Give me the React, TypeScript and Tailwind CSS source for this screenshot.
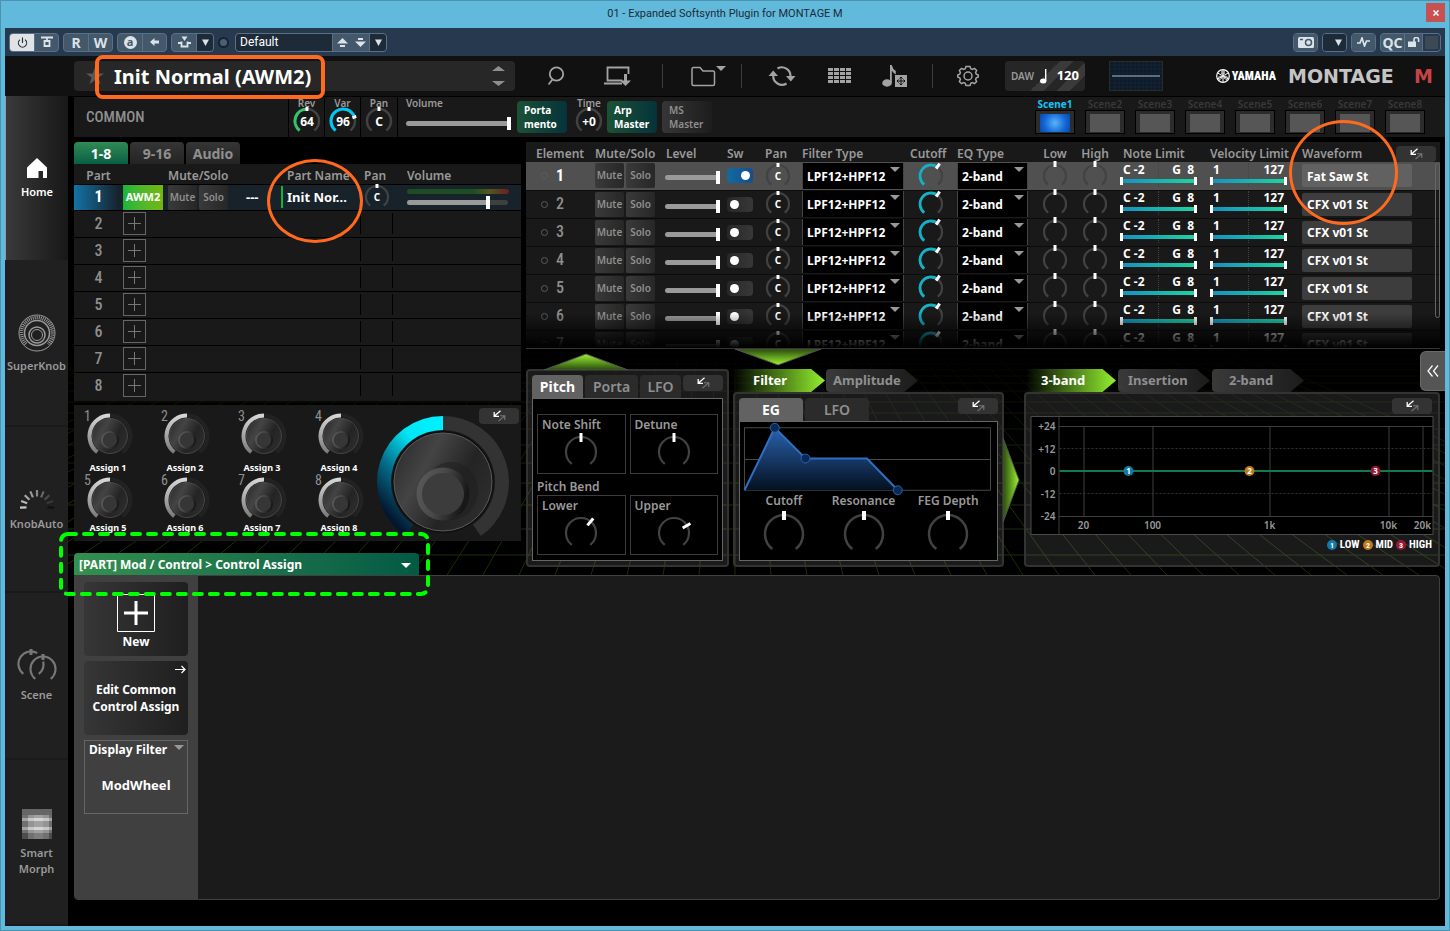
// App.tsx
import { ReactNode, useState } from "react";
import { Power } from "lucide-react";

const NARROW = "font-['Roboto_Condensed','Liberation_Sans_Narrow',Roboto,sans-serif]";

const polar = (cx: number, cy: number, r: number, deg: number) => {
    const a = ((deg - 90) * Math.PI) / 180;
    return [cx + r * Math.cos(a), cy + r * Math.sin(a)];
};

// arc from one angle to another, 0 is straight up, clockwise
const arc = (cx: number, cy: number, r: number, from: number, to: number) => {
    const [x1, y1] = polar(cx, cy, r, from);
    const [x2, y2] = polar(cx, cy, r, to);
    return `M${x1.toFixed(2)} ${y1.toFixed(2)}A${r} ${r} 0 ${to - from > 180 ? 1 : 0} 1 ${x2.toFixed(2)} ${y2.toFixed(2)}`;
};

interface KnobProps {
    r: number;
    angle?: number;
    color?: string;
    label?: string;
    stroke?: number;
    tickFrom?: number;
    tickTo?: number;
    tickWidth?: number;
    fontSize?: number;
}

function Knob({ r, angle = 0, color, label, stroke = 2.2, tickFrom = -2, tickTo = 2, tickWidth = 3, fontSize = 10 }: KnobProps) {
    const size = (r + 4) * 2;
    const c = size / 2;
    const [x1, y1] = polar(c, c, r + tickFrom, angle);
    const [x2, y2] = polar(c, c, r + tickTo, angle);
    return (
        <svg width={size} height={size} viewBox={`0 0 ${size} ${size}`} className="block shrink-0 overflow-visible">
            <path d={arc(c, c, r, -142, 142)} fill="none" stroke="#424242" strokeWidth={stroke} />
            {color && <path d={arc(c, c, r, -142, angle)} fill="none" stroke={color} strokeWidth={stroke + 0.6} />}
            <line x1={x1} y1={y1} x2={x2} y2={y2} stroke="#fff" strokeWidth={tickWidth} />
            {label && (
                <text x={c} y={c + fontSize * 0.4} textAnchor="middle" fill="#fff" fontSize={fontSize} fontWeight="700">
                    {label}
                </text>
            )}
        </svg>
    );
}

function ExpandButton({ className = "" }: { className?: string }) {
    return (
        <button aria-label="Expand" className={`flex h-4 w-10 shrink-0 items-center justify-center rounded bg-[#333] ${className}`}>
            <svg width="13" height="12" viewBox="0 0 13 12" fill="none">
                <path d="M7.500.8 1.500 6M1.200 2v4.300H6" stroke="#fff" strokeWidth="1.300" />
                <path d="M5.500 11.200 11.500 6M7 5.700h4.800V10" stroke="#777" strokeWidth="1.100" />
            </svg>
        </button>
    );
}

function Triangle({ className = "" }: { className?: string }) {
    return (
        <svg width="10" height="5" viewBox="0 0 10 5" className={`pointer-events-none ${className}`}>
            <path d="M0 0h10L5 5z" fill="currentColor" />
        </svg>
    );
}

/* ---------- host window ---------- */

const hostBtn = "flex h-full items-center justify-center bg-[#43586b] text-[#dbe2e8]";
const hostGroup = "flex h-[19px] gap-px overflow-hidden rounded-sm border border-[#5b7183] bg-[#5b7183]";
const hostMenu = "flex h-full w-4 items-center justify-center bg-[#1d2b39] text-[#dbe2e8]";

const MenuArrow = () => <svg width="7" height="7" viewBox="0 0 7 7"><path d="M0 .5h7l-3.500 6.500z" fill="currentColor" /></svg>;

function TitleBar() {
    return (
        <div className="relative flex h-[27px] items-center justify-center">
            <h1 className="text-[11px] text-[#1c2c36] font-[Roboto,sans-serif]">01 - Expanded Softsynth Plugin for MONTAGE M</h1>
            <button aria-label="Close" className="absolute right-0 top-0.5 flex h-[19px] w-[19px] items-center justify-center bg-[#c75050] text-white">
                <svg width="6" height="6" viewBox="0 0 6 6"><path d="M.5.5l5 5M5.500.5l-5 5" stroke="currentColor" strokeWidth="1.500" /></svg>
            </button>
        </div>
    );
}

function HostToolbar() {
    return (
        <div className="flex h-7 shrink-0 items-center gap-1 bg-[#27394e] px-1 text-[14px] font-bold">
            <div className={hostGroup}>
                <button aria-label="Power" className="flex w-6 items-center justify-center bg-[#dfe3e6] text-[#26323e]"><Power size={11} strokeWidth={2.5} /></button>
                <button aria-label="Bypass" className={`${hostBtn} w-[23px]`}>
                    <svg width="12" height="12" viewBox="0 0 12 12" fill="none" stroke="currentColor" strokeWidth="1.800"><path d="M0 1.500h12M3.500 5h5v5h-5zM6 1.500V5" /></svg>
                </button>
            </div>
            <div className={hostGroup}>
                <button className={`${hostBtn} w-6`}>R</button>
                <button className={`${hostBtn} w-[23px]`}>W</button>
            </div>
            <div className={hostGroup}>
                <button className={`${hostBtn} w-6`}><span className="flex h-[13px] w-[13px] items-center justify-center rounded-full bg-[#dbe2e8] pb-px text-[11px] leading-none text-[#43586b]">a</span></button>
                <button aria-label="Back" className={`${hostBtn} w-[23px]`}><svg width="9" height="8" viewBox="0 0 9 8"><path d="M0 4l4.500-4v2.500H9v3H4.500V8z" fill="currentColor" /></svg></button>
            </div>
            <div className={hostGroup}>
                <button aria-label="Routing" className={`${hostBtn} w-6`}>
                    <svg width="13" height="12" viewBox="0 0 13 12" fill="none" stroke="currentColor" strokeWidth="1.800"><path d="M0 7h3.500V5.500M13 7H9.500V5.500M3.500 7v3.500h6V7" /><path d="M3.500.5h6l-3 4.500z" fill="currentColor" stroke="none" /></svg>
                </button>
                <button aria-label="Routing menu" className={hostMenu}><MenuArrow /></button>
            </div>
            <span className="h-[11px] w-[11px] rounded-full border-2 border-[#16222e] bg-[#4a6078]"></span>
            <div className={`${hostGroup} ml-0.5`}>
                <input aria-label="Preset" defaultValue="Default" className="w-24 bg-[#1d2b39] px-1 text-[12px] font-normal text-white outline-none font-[Roboto,sans-serif]" />
                <button aria-label="Previous preset" className="flex w-[18px] items-center justify-center bg-[#43586b] text-[#dbe2e8]"><svg width="11" height="9" viewBox="0 0 11 9"><path d="M0 5.500 5.500 0 11 5.500zM3 7h5v2H3z" fill="currentColor" /></svg></button>
                <button aria-label="Next preset" className="-ml-px flex w-[18px] items-center justify-center bg-[#43586b] text-[#dbe2e8]"><svg width="11" height="9" viewBox="0 0 11 9"><path d="M0 3.500 5.500 9 11 3.500zM3 0h5v2H3z" fill="currentColor" /></svg></button>
                <button aria-label="Preset menu" className={hostMenu}><MenuArrow /></button>
            </div>
            <div className={`${hostGroup} ml-auto`}>
                <button aria-label="Snapshot" className={`${hostBtn} w-[23px]`}>
                    <svg width="16" height="11" viewBox="0 0 16 11"><rect width="16" height="11" rx="1.500" fill="currentColor" /><circle cx="10.500" cy="5.500" r="3" fill="none" stroke="#43586b" strokeWidth="1.500" /><path d="M2 2.500h3" stroke="#43586b" strokeWidth="1.500" /></svg>
                </button>
            </div>
            <div className={hostGroup}><button aria-label="Snapshot menu" className="flex h-full w-[23px] items-center justify-center bg-[#1d2b39] pl-2 text-[#dbe2e8]"><MenuArrow /></button></div>
            <div className={hostGroup}>
                <button aria-label="Activity" className={`${hostBtn} w-[23px]`}><svg width="13" height="10" viewBox="0 0 13 10" fill="none" stroke="currentColor" strokeWidth="1.700"><path d="M0 6h3l2-5 2.500 8L9.500 4H13" /></svg></button>
            </div>
            <div className={hostGroup}>
                <button className={`${hostBtn} w-[23px]`}>QC</button>
                <button aria-label="Unlock" className={`${hostBtn} w-[17px]`}><svg width="12" height="10" viewBox="0 0 12 10"><rect y="4.500" width="8" height="5.500" fill="currentColor" /><path d="M6 5V2.500a2.300 2 0 0 1 4.600 0V5" fill="none" stroke="currentColor" strokeWidth="1.600" /></svg></button>
                <span className="w-[17px] bg-[#27394e] p-0.5"><span className="block h-full bg-[#3c4a55]"></span></span>
            </div>
        </div>
    );
}

/* ---------- plugin header ---------- */

function IconButton({ label, className = "", children }: { label: string; className?: string; children: ReactNode }) {
    return <button aria-label={label} className={`flex shrink-0 items-center justify-center text-[#a3a3a3] ${className}`}>{children}</button>;
}

const Divider = () => <span className="h-6 w-px bg-[#3c3c3c]"></span>;

function PluginHeader() {
    return (
        <header className="flex h-10 shrink-0 items-center bg-[#111] pl-[69px] pr-3">
            <div className="relative flex h-[30px] w-[441px] items-center rounded bg-[#272727] pl-3">
                <svg width="18" height="18" viewBox="0 0 18 18"><path d="M9 0l2.200 6.500H18l-5.500 4.100 2 6.700L9 13.200l-5.500 4.100 2-6.700L0 6.500h6.800z" fill="#585858" /></svg>
                <span className="ml-2.5 pt-0.5 text-[20px] font-bold text-white">Init Normal (AWM2)</span>
                <button aria-label="Change performance" className="ml-auto mr-2.5 text-[#8f8f8f]">
                    <svg width="13" height="20" viewBox="0 0 13 20"><path d="M0 5 6.500 0 13 5zM0 15l6.500 5 6.500-5z" fill="currentColor" /></svg>
                </button>
                <span className="pointer-events-none absolute -top-1.5 left-[21px] z-30 h-11 w-[230px] rounded-lg border-4 border-[#ff6a1f]"></span>
            </div>
            <IconButton label="Search" className="ml-8 w-[18px]">
                <svg width="18" height="20" viewBox="0 0 18 20" fill="none" stroke="currentColor" strokeWidth="1.800"><circle cx="9.500" cy="8" r="6.700" /><path d="M5.500 13.500 1.500 18.500" /></svg>
            </IconButton>
            <IconButton label="Store" className="ml-[39px] w-7">
                <svg width="28" height="20" viewBox="0 0 28 20" fill="none" stroke="currentColor" strokeWidth="1.800"><path d="M18.500 14.500H3.500V1.500h21V8M0 17.500h18" /><path d="M21.500 8v8" strokeWidth="3" /><path d="M16 14.500h11l-5.500 5.500z" fill="currentColor" stroke="none" /></svg>
            </IconButton>
            <span className="w-[30px]"></span>
            <Divider />
            <IconButton label="Files" className="ml-7 w-9">
                <svg width="36" height="22" viewBox="0 0 36 22" fill="none" stroke="currentColor" strokeWidth="1.500"><path d="M1 4q0-1.500 1.500-1.500H9l3 3.500h10q1.500 0 1.500 1.500V19q0 1.500-1.500 1.500H2.500Q1 20.500 1 19z" /><path d="M25 1h10l-5 5z" fill="currentColor" stroke="none" /></svg>
            </IconButton>
            <span className="w-3.5"></span>
            <Divider />
            <IconButton label="Refresh" className="ml-[26px] w-7">
                <svg width="28" height="20" viewBox="0 0 28 20" fill="none" stroke="currentColor" strokeWidth="2.200"><path d="M9.500 2.500A8.700 8.700 0 0 1 22.500 10.500M18.500 17.500A8.700 8.700 0 0 1 5.300 9.500" /><path d="M18 10h9.500l-4.700 5.500zM.5 10h9.500L5.200 4.500z" fill="currentColor" stroke="none" /></svg>
            </IconButton>
            <IconButton label="Grid" className="ml-8 w-6">
                <svg width="24" height="16" viewBox="0 0 24 16">
                    {[0, 1, 2, 3].map((r) => [0, 1, 2, 3].map((c) => <rect key={`${r}-${c}`} x={c * 6} y={r * 4} width="5" height="3" fill="currentColor" />))}
                </svg>
            </IconButton>
            <IconButton label="Audition" className="ml-[30px] w-[26px]">
                <svg width="26" height="22" viewBox="0 0 26 22" fill="currentColor"><ellipse cx="5" cy="18" rx="4.800" ry="3.700" /><path d="M8 0h1.800q.7 4 4 6v3.500q-2.800-1.800-4-4V18H8z" /><path d="M13 10h12v12H13z" /><path d="M19 12v8M15 16h8M17.500 13.500 19 12l1.500 1.500M17.500 18.500 19 20l1.500-1.500M16.500 14.500 15 16l1.500 1.500M21.500 14.500 23 16l-1.500 1.500" stroke="#111" fill="none" /></svg>
            </IconButton>
            <span className="w-6"></span>
            <Divider />
            <IconButton label="Settings" className="ml-6 w-[22px]">
                <svg width="22" height="22" viewBox="0 0 22 22" fill="none" stroke="currentColor" strokeWidth="1.500"><path d="M9 1.500h4l.8 2.200 1.600.7 2.100-1 2.100 2.100-1 2.100.7 1.600 2 .8v2l-2 .8-.7 1.600 1 2.100-2.100 2.100-2.100-1-1.600.7-.8 2.200H9l-.8-2.200-1.600-.7-2.100 1-2.100-2.100 1-2.100-.7-1.600-2-.8v-2l2-.8.7-1.600-1-2.100 2.100-2.100 2.100 1 1.600-.7z" /><circle cx="11" cy="11" r="4" /></svg>
            </IconButton>
            <button className="ml-[26px] flex h-[30px] w-20 items-center rounded bg-[linear-gradient(135deg,#262626_50%,#3a3a3a_50%,#3a3a3a_62%,#262626_62%,#262626_74%,#3a3a3a_74%,#3a3a3a_86%,#262626_86%)] px-1.5">
                <span className="text-[10px] font-semibold text-[#999]">DAW</span>
                <svg width="8" height="15" viewBox="0 0 8 15" className="ml-1.5"><ellipse cx="3.200" cy="12" rx="3.200" ry="2.500" fill="#fff" /><path d="M5.700 0v12" stroke="#fff" strokeWidth="1.400" /></svg>
                <span className="ml-auto text-[13px] font-bold text-white">120</span>
            </button>
            <svg width="54" height="30" viewBox="0 0 54 30" className="ml-6 shrink-0">
                <rect x=".5" y=".5" width="53" height="29" fill="#0d1a28" stroke="#2c2c2c" />
                <path d="M1 4h52M1 8h52M1 12h52M1 18h52M1 22h52M1 26h52M6 1v28M10 1v28M14 1v28M18 1v28M22 1v28M26 1v28M30 1v28M34 1v28M38 1v28M42 1v28M46 1v28M50 1v28" stroke="#142334" strokeWidth="1" />
                <path d="M3 15h48" stroke="#7d8894" strokeWidth="1.500" />
            </svg>
            <div className="ml-auto flex items-center">
                <svg width="14" height="14" viewBox="0 0 14 14" fill="none" stroke="#fff"><circle cx="7" cy="7" r="6.300" strokeWidth="1.200" /><path d="M7 1v12M1.800 4l10.400 6M1.800 10l10.400-6" /><path d="M5.800 1.500v3.500h2.400V1.500M2 8.500l3-1.500 1 2-3 2M12 8.500 9 7 8 9l3 2" strokeWidth=".8" /></svg>
                <span className={`${NARROW} ml-0.5 text-[12px] font-black text-white`}>YAMAHA</span>
                <span className="ml-3 flex w-[145px] justify-between text-[19px] leading-none text-[#c4c4c4] font-['DejaVu_Sans',sans-serif]"><b>MONTAGE</b><b className="text-[#c84444]">M</b></span>
            </div>
        </header>
    );
}

const hSlider = "block h-[5px] appearance-none rounded-full bg-[#9a9a9a] [&::-webkit-slider-thumb]:h-[13px] [&::-webkit-slider-thumb]:w-1 [&::-webkit-slider-thumb]:appearance-none [&::-webkit-slider-thumb]:bg-white";

const commonKnobs = [
    { name: "Rev", value: "64", angle: 0, color: "#35c26e" },
    { name: "Var", value: "96", angle: 71, color: "#00c8f5" },
    { name: "Pan", value: "C", angle: 0, color: undefined },
];

function SmallKnob({ name, value, angle, color }: { name: string; value: string; angle: number; color?: string }) {
    return (
        <div className="flex h-full w-9 flex-col items-center">
            <span className="-mb-1 h-3 text-[10px] font-semibold leading-3 text-[#999]">{name}</span>
            <Knob r={12} angle={angle} color={color} label={value} fontSize={12} stroke={2.5} />
        </div>
    );
}

function CommonBar() {
    const [scene, setScene] = useState(0);
    return (
        <div className="ml-1.5 mt-px flex h-10 shrink-0 items-start bg-[#191919] pl-3">
            <h2 className={`${NARROW} w-[202px] self-center text-[15px] font-medium text-[#8f8f8f]`}>COMMON</h2>
            <div className="flex h-full divide-x divide-black border-x border-black">
                {commonKnobs.map((k) => <SmallKnob key={k.name} {...k} />)}
            </div>
            <label className="ml-2 flex flex-col text-[10px] font-semibold leading-3 text-[#999]">
                Volume
                <input type="range" min="0" max="127" defaultValue="127" className={`${hSlider} mt-3 w-[105px]`} />
            </label>
            <button className="ml-1.5 mt-1 h-8 w-[50px] rounded bg-linear-to-r from-[#1b5234] to-[#06333a] pl-[7px] text-left text-[10px] font-bold leading-[14px] text-white">Porta<br />mento</button>
            <div className="ml-1 flex h-full"><SmallKnob name="Time" value="+0" angle={0} /></div>
            <button className="mt-1 h-8 w-[50px] rounded bg-linear-to-r from-[#1b5234] to-[#06333a] pl-[7px] text-left text-[10px] font-bold leading-[14px] text-white">Arp<br />Master</button>
            <button className="ml-[5px] mt-1 h-8 w-[50px] rounded bg-linear-to-r from-[#363636] to-[#1d1d1d] pl-[7px] text-left text-[10px] font-semibold leading-[14px] text-[#8f8f8f]">MS<br />Master</button>
            <div className="ml-auto mr-4 flex gap-[2px] pt-px">
                {[1, 2, 3, 4, 5, 6, 7, 8].map((n, i) => (
                    <button key={n} onClick={() => setScene(i)} className="flex w-12 flex-col items-center">
                        <span className={`text-[10px] leading-3 ${scene === i ? "font-bold text-[#12c4f5]" : "font-semibold text-[#383838]"}`}>Scene{n}</span>
                        <span className="block h-6 w-10 border border-black bg-[#2c2c2c] px-1 pb-px pt-[3px]">
                            <span className={`block h-full ${scene === i ? "bg-[radial-gradient(circle,#59b4f7,#1467d8_60%,#0747a6)]" : "bg-[#565656]"}`}></span>
                        </span>
                    </button>
                ))}
            </div>
        </div>
    );
}

/* ---------- side navigation ---------- */

const HomeIcon = () => (
    <svg width="20" height="20" viewBox="0 0 20 20"><path d="M10 0 0 9.500V20h11.500v-7H16v7h4V9.500z" fill="#fff" /></svg>
);

const SuperKnobIcon = () => (
    <svg width="38" height="38" viewBox="0 0 38 38" fill="none" stroke="#9a9a9a">
        <circle cx="19" cy="19" r="18" />
        <path d={arc(19, 19, 15.5, -135, 135)} strokeWidth="3.500" strokeDasharray="1 1" />
        <circle cx="19" cy="19" r="12.500" strokeWidth="1.500" />
        <circle cx="19" cy="21" r="8" strokeWidth="1.500" />
        <circle cx="19" cy="21" r="5.500" />
    </svg>
);

const KnobAutoIcon = () => (
    <svg width="36" height="22" viewBox="0 0 36 22">
        {[-92, -69, -46, -23, 0, 23, 46, 69, 92].map((a, i) => {
            const [x1, y1] = polar(18, 19, 10.5, a);
            const [x2, y2] = polar(18, 19, 17, a);
            const shade = ["#c8c8c8", "#b8b8b8", "#a8a8a8", "#989898", "#888", "#686868", "#4c4c4c", "#383838", "#111"][i];
            return <line key={a} x1={x1} y1={y1} x2={x2} y2={y2} stroke={shade} strokeWidth="2.200" />;
        })}
    </svg>
);

const SceneIcon = () => (
    <svg width="40" height="32" viewBox="0 0 40 32" fill="none" stroke="#777" strokeWidth="2.200">
        <path d={arc(14, 15, 12.5, -142, 30)} />
        <path d={arc(14, 15, 12.5, 78, 142)} />
        <path d={arc(26, 20, 12.5, -142, 142)} />
        <path d="M14 0v6M26 5v6" strokeWidth="3" />
    </svg>
);

const SmartMorphIcon = () => (
    <svg width="30" height="30" viewBox="0 0 10 10">
        <rect width="10" height="10" fill="#666" />
        {Array.from({ length: 80 }, (_, i) => {
            const x = i % 10;
            const y = Math.floor(i / 10) + 2;
            const l = 42 + (x > 1 && x < 9 ? 16 : 2) + (y === 3 || y === 6 ? 20 : 0) + (x > 3 && x < 7 ? 5 : 0) - (y > 7 ? 14 : 0);
            return <rect key={i} x={x} y={y} width="1" height="1" fill={`hsl(0 0% ${l}%)`} />;
        })}
    </svg>
);

const navItems = [
    { label: "Home", icon: <HomeIcon /> },
    { label: "SuperKnob", icon: <SuperKnobIcon /> },
    { label: "KnobAuto", icon: <KnobAutoIcon /> },
    { label: "Scene", icon: <SceneIcon /> },
    { label: "Smart Morph", icon: <SmartMorphIcon /> },
];

function SideNav() {
    return (
        <nav className="flex w-[63px] shrink-0 flex-col bg-[#202020]">
            {navItems.map(({ label, icon }, i) => (
                <a key={label} href={`#${i}`} className={`flex flex-1 flex-col items-center justify-center gap-1.5 pt-0.5 text-center text-[11px] font-semibold leading-4 ${i === 0 ? "border-l border-[#999] bg-linear-to-r from-[#3a3a3a] to-[#181818] text-white" : "border-b-2 border-[#1a1a1a] text-[#999]"}`}>
                    {icon}
                    <span className="w-min">{label}</span>
                </a>
            ))}
        </nav>
    );
}

/* ---------- parts ---------- */

const grayBtn = "rounded-xs bg-linear-to-r from-[#3a3a3a] to-[#272727] text-[10px] font-semibold text-[#8f8f8f]";

function PartTable() {
    return (
        <div className="h-[237px] bg-[#191919]">
            <table className="w-full table-fixed border-collapse">
                <colgroup>
                    <col className="w-[49px]" /><col className="w-[45px]" /><col className="w-[70px]" /><col className="w-[43px]" /><col className="w-[79px]" /><col className="w-[33px]" /><col />
                </colgroup>
                <thead>
                    <tr className="h-5 text-left text-[12px] leading-4 text-[#999] *:py-0 *:align-bottom">
                        <th className="text-center font-semibold">Part</th>
                        <th></th>
                        <th colSpan={2} className="pl-0 font-semibold">Mute/Solo</th>
                        <th className="pl-1.5 font-semibold whitespace-nowrap">Part Name</th>
                        <th className="pl-1 font-semibold">Pan</th>
                        <th className="pl-3.5 font-semibold">Volume</th>
                    </tr>
                </thead>
                <tbody>
                    <tr className="h-[26px] border-y border-black bg-[linear-gradient(90deg,#1273a6,#17222b_45px,#18222a)] text-white">
                        <td className={`${NARROW} p-0 text-center text-[16px] leading-5 font-bold`}>1</td>
                        <td className="p-0"><button className="block h-[25px] w-10 bg-linear-to-r from-[#12b53a] to-[#72b80a] text-[11px] font-bold text-white">AWM2</button></td>
                        <td className="p-0">
                            <div className="flex gap-0.5"><button className={`${grayBtn} h-[25px] w-[29px]`}>Mute</button><button className={`${grayBtn} h-[25px] w-[29px]`}>Solo</button></div>
                        </td>
                        <td className="py-0 pl-2 text-[13px] leading-5 font-bold">---</td>
                        <td className="relative p-0">
                            <span className="block h-[22px] border-l-2 border-[#12b53a] pl-1 text-[13px] font-bold leading-[22px] whitespace-nowrap">Init Nor...</span>
                            <span className="pointer-events-none absolute -left-3.5 -top-[26px] z-30 h-[84px] w-24 rounded-[50%] border-[3px] border-[#ff6a1f]"></span>
                        </td>
                        <td className="h-[25px] p-0"><div className="flex h-[25px] items-center justify-center"><Knob r={11} label="C" /></div></td>
                        <td className="p-0 pl-3.5">
                            <div className="mr-3 h-[5px] rounded-full bg-[linear-gradient(90deg,#1d4d22_65%,#4f5a1c_80%,#6b1f1f)]"></div>
                            <input aria-label="Part 1 volume" type="range" min="0" max="127" defaultValue="103" className={`${hSlider} mt-1.5 mb-px w-[101px] bg-[linear-gradient(90deg,#9a9a9a_80%,#3f3f3f_80%)]`} />
                        </td>
                    </tr>
                    {[2, 3, 4, 5, 6, 7, 8].map((n) => (
                        <tr key={n} className="h-[27px] border-b border-black last:border-0">
                            <td className={`${NARROW} p-0 text-center text-[16px] leading-5 font-medium text-[#8f8f8f]`}>{n}</td>
                            <td className="p-0">
                                <button aria-label={`Add part ${n}`} className="flex h-[23px] w-[23px] items-center justify-center border border-[#666] text-[#777]">
                                    <svg width="13" height="13" viewBox="0 0 13 13"><path d="M6.500 0v13M0 6.500h13" stroke="currentColor" /></svg>
                                </button>
                            </td>
                            <td></td><td></td><td></td>
                            <td className="p-0"><div className="h-[21px] border-x border-black"></div></td>
                            <td></td>
                        </tr>
                    ))}
                </tbody>
            </table>
        </div>
    );
}

function AssignKnob({ n }: { n: number }) {
    return (
        <div className="relative w-[77px]">
            <span className={`${NARROW} absolute left-2.5 -top-1 text-[14px] leading-4 text-[#8f8f8f]`}>{n}</span>
            <svg width="48" height="46" viewBox="0 0 48 46" className="ml-3 block">
                <path d={arc(24, 24, 20.5, 0, 142)} fill="none" stroke="#222" strokeWidth="4" />
                <path d={arc(24, 24, 20.5, -142, 0)} fill="none" stroke="url(#assignArc)" strokeWidth="4" />
                <circle cx="24" cy="24" r="17.500" fill="url(#disc)" stroke="#555" strokeWidth=".7" />
                <circle cx="24" cy="28" r="9" fill="url(#hub)" />
                <circle cx="24" cy="28" r="7.200" fill="#363636" />
            </svg>
            <span className={`block w-[68px] text-center text-[9px] font-bold leading-3 text-white ${n < 5 ? "pt-1" : ""}`}>Assign {n}</span>
        </div>
    );
}

function SuperKnobPanel() {
    return (
        <div className="relative mt-1 flex h-[136px] bg-[#191919]">
            <svg width="0" height="0" className="absolute">
                <defs>
                    <linearGradient id="assignArc" x1="0" y1="0" x2="0" y2="1"><stop offset="0" stopColor="#d5d5d5" /><stop offset="1" stopColor="#7c7c7c" /></linearGradient>
                    <linearGradient id="disc" x1="0" y1=".2" x2="1" y2=".75"><stop offset="0" stopColor="#2d2d2d" /><stop offset=".3" stopColor="#444" /><stop offset=".65" stopColor="#242424" /><stop offset="1" stopColor="#2e2e2e" /></linearGradient>
                    <linearGradient id="hub" x1="0" y1="0" x2="1" y2=".3"><stop offset="0" stopColor="#5c5c5c" /><stop offset=".5" stopColor="#4a4a4a" /><stop offset="1" stopColor="#181818" /></linearGradient>
                    <linearGradient id="superArc" x1=".9" y1="0" x2=".3" y2="1"><stop offset="0" stopColor="#00f0ff" /><stop offset=".3" stopColor="#00e5f5" /><stop offset=".65" stopColor="#046f8c" /><stop offset="1" stopColor="#04152e" /></linearGradient>
                </defs>
            </svg>
            <div className="grid auto-rows-[64px] grid-cols-4 pt-[7px]">
                {[1, 2, 3, 4, 5, 6, 7, 8].map((n) => <AssignKnob key={n} n={n} />)}
            </div>
            <svg width="134" height="134" viewBox="0 0 134 134" className="-ml-1.5 mt-2.5 block shrink-0">
                <path d={arc(67, 67, 59, 0, 145)} fill="none" stroke="#333" strokeWidth="14" />
                <path d={arc(67, 67, 59, -145, 0)} fill="none" stroke="url(#superArc)" strokeWidth="14" />
                <circle cx="67" cy="67" r="51" fill="#101010" />
                <circle cx="67" cy="67" r="49" fill="url(#disc)" stroke="#5a5a5a" strokeWidth="1" />
                <ellipse cx="75" cy="76" rx="27" ry="29" fill="#1e1e1e" opacity=".5" />
                <circle cx="67" cy="79" r="26.500" fill="url(#hub)" />
                <circle cx="67" cy="79" r="21" fill="#3c3c3c" />
            </svg>
            <ExpandButton className="absolute right-0.5 top-[3px]" />
        </div>
    );
}

function LeftColumn() {
    const [tab, setTab] = useState("1-8");
    return (
        <div className="relative w-[447px] shrink-0">
            <div className="flex h-[22px] gap-0.5">
                {["1-8", "9-16", "Audio"].map((t) => (
                    <button key={t} onClick={() => setTab(t)} className={`w-[54px] rounded-t text-[14px] font-bold ${tab === t ? "bg-linear-to-b from-[#2f8b52] to-[#075f45] text-white" : "bg-linear-to-b from-[#353535] to-[#242424] text-[#8f8f8f]"}`}>{t}</button>
                ))}
            </div>
            <PartTable />
            <SuperKnobPanel />
            <div className="relative mt-3 w-[345px]">
                <button className="flex h-[22px] w-full items-center justify-between rounded-t bg-linear-to-r from-[#33904f] to-[#035a44] pl-[5px] pr-2 pt-0.5 text-[12px] font-bold text-white">
                    [PART] Mod / Control &gt; Control Assign
                    <Triangle />
                </button>
                <svg width="372" height="64" viewBox="0 0 372 64" className="pointer-events-none absolute -left-[15px] -top-[21px] z-30">
                    <rect x="2" y="2" width="367" height="60" rx="7" fill="none" stroke="#0f0" strokeWidth="4" strokeLinecap="round" strokeDasharray="8 8" />
                </svg>
            </div>
        </div>
    );
}

/* ---------- elements ---------- */

function LimitBar({ low, high }: { low: string; high: string }) {
    return (
        <div className="relative mb-1 ml-1.5 w-[77px] text-[12px] font-bold leading-[14px] text-white">
            <div className="flex justify-between px-[3px] whitespace-pre"><span>{low}</span><span>{high}</span></div>
            <span className="absolute left-[38px] top-0 h-6 border-l border-dotted border-[#444]"></span>
            <div className="relative flex h-2 items-center justify-between bg-[linear-gradient(90deg,#1590c4,#1dd6a0)] bg-size-[100%_4px] bg-center bg-no-repeat">
                <span className="h-2 w-[3px] bg-white"></span>
                <span className="h-2 w-[3px] bg-white"></span>
            </div>
        </div>
    );
}

function CellSelect({ label, value, className }: { label: string; value: string; className: string }) {
    return (
        <div className={`relative ${className}`}>
            <select aria-label={label} className="block h-[26px] w-full appearance-none border-x border-[#444] bg-black pl-1 pt-0.5 text-[12px] font-bold text-white">
                <option>{value}</option>
            </select>
            <Triangle className="absolute right-1 top-1 text-[#999]" />
        </div>
    );
}

function ElementTable() {
    const rows = ["Fat Saw St", "CFX v01 St", "CFX v01 St", "CFX v01 St", "CFX v01 St", "CFX v01 St", "CFX v01 St"];
    return (
        <div className="relative">
            <div className="relative h-[207px] overflow-hidden bg-[#191919]">
                <table className="w-full table-fixed border-collapse">
                    <colgroup>
                        <col className="w-[69px]" /><col className="w-[63px]" /><col className="w-[66px]" /><col className="w-9" /><col className="w-[42px]" /><col className="w-[102px]" /><col className="w-[53px]" /><col className="w-[77px]" /><col className="w-[42px]" /><col className="w-[38px]" /><col className="w-[90px]" /><col className="w-[92px]" /><col />
                    </colgroup>
                    <thead>
                        <tr className="h-5 text-left text-[12px] leading-4 whitespace-nowrap text-[#999] *:p-0 *:align-bottom *:font-semibold">
                            <th><span className="pl-2.5">Element</span></th>
                            <th>Mute/Solo</th>
                            <th><span className="pl-2">Level</span></th>
                            <th><span className="pl-[3px]">Sw</span></th>
                            <th><span className="pl-[5px]">Pan</span></th>
                            <th>Filter Type</th>
                            <th><span className="pl-1.5">Cutoff</span></th>
                            <th>EQ Type</th>
                            <th className="text-center">Low</th>
                            <th className="text-center">High</th>
                            <th><span className="pl-[9px]">Note Limit</span></th>
                            <th><span className="pl-1.5">Velocity Limit</span></th>
                            <th><div className="flex items-center justify-between pl-1.5 pr-1">Waveform<ExpandButton /></div></th>
                        </tr>
                    </thead>
                    <tbody>
                        {rows.map((wave, i) => (
                            <tr key={i} className={`h-7 border-b border-[#0c0c0c] *:p-0 ${i === 0 ? "bg-[#505050]" : ""}`}>
                                <td>
                                    <div className={`${NARROW} flex items-center pl-[15px] text-[16px] leading-5 ${i === 0 ? "font-bold text-white" : "font-medium text-[#8f8f8f]"}`}>
                                        <span className="mr-2 h-[7px] w-[7px] rounded-full border border-[#5c5c5c]"></span>{i + 1}
                                    </div>
                                </td>
                                <td><div className="flex gap-0.5"><button className={`${grayBtn} h-[25px] w-[29px]`}>Mute</button><button className={`${grayBtn} h-[25px] w-[29px]`}>Solo</button></div></td>
                                <td><input aria-label={`Element ${i + 1} level`} type="range" defaultValue="100" className={`${hSlider} ml-[7px] mt-1 w-[55px]`} /></td>
                                <td>
                                    <input aria-label={`Element ${i + 1} switch`} type="checkbox" defaultChecked={i === 0} className="ml-[3px] flex h-[15px] w-[26px] appearance-none items-center rounded bg-linear-to-r from-[#272727] to-[#383838] px-[3px] before:h-[9px] before:w-[9px] before:rounded-full before:bg-white checked:justify-end checked:from-[#116b9e] checked:to-[#174c8f]" />
                                </td>
                                <td><div className="flex h-[26px] items-center pl-[3px]"><Knob r={11} label="C" /></div></td>
                                <td><CellSelect label={`Element ${i + 1} filter type`} value="LPF12+HPF12" className="w-[102px]" /></td>
                                <td><div className="flex h-[26px] items-center pl-3"><Knob r={11} angle={35} color="#14b0c4" tickTo={4} /></div></td>
                                <td><CellSelect label={`Element ${i + 1} EQ type`} value="2-band" className="w-[71px]" /></td>
                                <td><div className="flex h-[26px] items-center justify-center"><Knob r={11} tickTo={4} /></div></td>
                                <td><div className="flex h-[26px] items-center justify-center"><Knob r={11} tickTo={4} /></div></td>
                                <td><LimitBar low="C -2" high="G  8" /></td>
                                <td><LimitBar low="1" high="127" /></td>
                                <td><button className={`ml-1.5 block h-[23px] w-[110px] rounded-xs pl-[5px] pt-0.5 text-left text-[12px] font-bold text-white ${i === 0 ? "bg-[#616161]" : "bg-[#3d3d3d]"}`}>{wave}</button></td>
                            </tr>
                        ))}
                    </tbody>
                </table>
                <div className="pointer-events-none absolute inset-x-0 bottom-0 h-9 border-b border-[#333] bg-linear-to-b from-transparent to-black"></div>
            </div>
            <span className="absolute right-0 top-[21px] h-[155px] w-[5px] rounded-full border border-[#666]"></span>
            <span className="pointer-events-none absolute -top-[22px] right-[42px] z-30 h-[105px] w-[109px] rounded-[50%] border-[3px] border-[#ff6a1f]"></span>
        </div>
    );
}

/* ---------- edit panels ---------- */

const panel = "rounded-sm border-2 border-[#333] bg-white/10";
const tabBase = "flex items-center justify-center rounded-t text-[14px] font-bold";

function KnobCell({ label, angle }: { label: string; angle: number }) {
    return (
        <div className="flex h-15 flex-col border border-[#3c3c3c] pt-0.5">
            <span className="pl-1 text-[12px] font-semibold leading-4 text-[#999]">{label}</span>
            <div className="flex justify-center"><Knob r={15} angle={angle} tickFrom={-5} tickTo={4} /></div>
        </div>
    );
}

function PitchPanel() {
    return (
        <div className="relative mt-5 w-[203px] shrink-0">
            <svg width="84" height="17" viewBox="0 0 84 17" className="absolute -top-4 left-[18px]">
                <defs><linearGradient id="up" x1="0" y1="0" x2="0" y2="1"><stop offset="0" stopColor="#9bf533" /><stop offset="1" stopColor="#2a4a0c" /></linearGradient></defs>
                <path d="M0 17 42 1l42 16z" fill="url(#up)" stroke="#555" />
            </svg>
            <div className={`${panel} h-[198px] p-1`}>
                <div className="flex h-[23px] items-stretch gap-0.5">
                    <button className={`${tabBase} w-[51px] bg-[#626262] text-white`}>Pitch</button>
                    <button className={`${tabBase} w-[53px] bg-[#2b2b2b] font-semibold text-[#8f8f8f]`}>Porta</button>
                    <button className={`${tabBase} w-[41px] bg-[#2b2b2b] font-semibold text-[#8f8f8f]`}>LFO</button>
                    <ExpandButton />
                </div>
                <div className="h-[163px] border border-[#666] bg-black px-1 pt-[15px]">
                    <div className="grid grid-cols-2 gap-1"><KnobCell label="Note Shift" angle={0} /><KnobCell label="Detune" angle={0} /></div>
                    <h3 className="pt-[5px] text-[12px] font-semibold leading-4 text-[#999]">Pitch Bend</h3>
                    <div className="grid grid-cols-2 gap-1"><KnobCell label="Lower" angle={40} /><KnobCell label="Upper" angle={60} /></div>
                </div>
            </div>
        </div>
    );
}

function ArrowTab({ active, children, className }: { active?: boolean; children: ReactNode; className: string }) {
    return (
        <button className={`${className} flex h-[23px] items-center text-[13px] font-bold [clip-path:polygon(0_0,85%_0,100%_50%,85%_100%,0_100%)] ${active ? "bg-linear-to-r from-transparent to-[#93f02f] text-white" : "rounded-l-sm bg-linear-to-r from-[#3a3a3a] to-[#1c1c1c] text-[#8f8f8f]"}`}>{children}</button>
    );
}

function FilterPanel() {
    return (
        <div className="relative mt-5 w-[271px] shrink-0">
            <svg width="86" height="17" viewBox="0 0 86 17" className="absolute -top-5 left-0.5">
                <defs><linearGradient id="down" x1="0" y1="0" x2="0" y2="1"><stop offset="0" stopColor="#2a4a0c" /><stop offset="1" stopColor="#9bf533" /></linearGradient></defs>
                <path d="M0 0 43 16 86 0z" fill="url(#down)" stroke="#555" />
            </svg>
            <svg width="18" height="84" viewBox="0 0 18 84" className="absolute -right-[17px] top-[69px]">
                <defs><linearGradient id="right"><stop offset="0" stopColor="#2a4a0c" /><stop offset="1" stopColor="#9bf533" /></linearGradient></defs>
                <path d="M0 0 16 42 0 84z" fill="url(#right)" stroke="#555" />
            </svg>
            <div className="flex gap-px">
                <ArrowTab active className="w-[92px] pl-5">Filter</ArrowTab>
                <ArrowTab className="w-[92px] pl-[7px]">Amplitude</ArrowTab>
            </div>
            <div className={`${panel} h-[175px] px-1 pt-1`}>
                <div className="flex h-[23px] gap-0.5">
                    <button className={`${tabBase} w-16 bg-[#626262] text-white`}>EG</button>
                    <button className={`${tabBase} w-16 bg-[#2b2b2b] font-semibold text-[#8f8f8f]`}>LFO</button>
                    <ExpandButton className="ml-auto" />
                </div>
                <div className="h-[140px] border border-[#666] bg-black px-1">
                    <svg width="100%" height="76" viewBox="0 0 251 76" className="block overflow-visible">
                        <defs><linearGradient id="eg" x1="0" y1="0" x2="0" y2="1"><stop offset="0" stopColor="#2a62b0" /><stop offset="1" stopColor="#04101f" /></linearGradient></defs>
                        <path d="M.5 5.500h248v63H.5zM.5 37.500h248" fill="none" stroke="#4a4a4a" />
                        <path d="M.5 68.500 31 5.500l31 31h62l31 32z" fill="url(#eg)" />
                        <path d="M.5 68.500 31 5.500l31 31h62l31 32" fill="none" stroke="#2f6fc0" strokeWidth="2" />
                        {[[31, 5.5], [62, 36.5], [155, 68.5]].map(([x, y]) => <circle key={x} cx={x} cy={y} r="4.500" fill="#0a2a55" stroke="#2763b0" />)}
                    </svg>
                    <div className="flex">
                        {[["Cutoff", "w-20"], ["Resonance", "w-20"], ["FEG Depth", "w-[90px]"]].map(([l, w]) => (
                            <div key={l} className={`${w} -mt-[5px] flex flex-col items-center gap-0.5`}>
                                <span className="text-[12px] font-semibold leading-4 whitespace-nowrap text-[#999]">{l}</span>
                                <Knob r={19} tickFrom={-5} tickTo={4} tickWidth={4} stroke={2.5} />
                            </div>
                        ))}
                    </div>
                </div>
            </div>
        </div>
    );
}

const bands = [
    { n: 1, name: "LOW", color: "#1478a8", x: 98 },
    { n: 2, name: "MID", color: "#bf7a18", x: 219 },
    { n: 3, name: "HIGH", color: "#9c1734", x: 345 },
];

function EqPanel() {
    return (
        <div className="ml-4 mt-5 min-w-0 flex-1">
            <div className="ml-0.5 flex gap-0.5">
                <ArrowTab active className="w-[90px] pl-[15px]">3-band</ArrowTab>
                <ArrowTab className="w-[92px] pl-2.5">Insertion</ArrowTab>
                <ArrowTab className="w-[92px] pl-[17px]">2-band</ArrowTab>
            </div>
            <div className={`${panel} h-[175px] px-1 pt-1`}>
                <ExpandButton className="ml-auto mr-0.5" />
                <svg width="100%" height="119" viewBox="0 0 403 119" className="mt-0.5 block text-[10px] font-semibold">
                    <path d="M.5.5h402v118H.5z" fill="#000" stroke="#4a4a4a" />
                    <path d="M28.500 0v118M28 10.500h375M28 100.500h375M53.500 10v90M122.500 10v90M239.500 10v90M358.500 10v90M392.500 10v90" stroke="#3f3f3f" />
                    <path d="M29 32.500h373M29 77.500h373" stroke="#333" strokeDasharray="2 2" />
                    <path d="M29 55h373" stroke="#117a50" strokeWidth="2" />
                    {["+24", "+12", "0", "-12", "-24"].map((t, i) => <text key={t} x="25" y={14 + i * 22.5} textAnchor="end" fill="#999">{t}</text>)}
                    {[["20", 53], ["100", 122], ["1k", 239], ["10k", 358], ["20k", 392]].map(([t, x]) => <text key={t} x={x} y="113" textAnchor="middle" fill="#999">{t}</text>)}
                    {bands.map((b) => (
                        <g key={b.n}><circle cx={b.x} cy="55" r="5" fill={b.color} /><text x={b.x} y="58" fontSize="8" fontWeight="700" textAnchor="middle" fill="#fff">{b.n}</text></g>
                    ))}
                </svg>
                <div className={`${NARROW} mt-0.5 flex items-center justify-end gap-[3px] pr-0.5 text-[11px] font-bold leading-4 text-white`}>
                    {bands.map((b) => (
                        <span key={b.n} className="flex items-center gap-[3px]">
                            <svg width="10" height="10" viewBox="0 0 10 10"><circle cx="5" cy="5" r="5" fill={b.color} /><text x="5" y="8" fontSize="8" textAnchor="middle" fill="#fff">{b.n}</text></svg>
                            {b.name}
                        </span>
                    ))}
                </div>
            </div>
        </div>
    );
}

function FloorGrid() {
    const ys = [4, 10, 15, 21, 27, 34, 42, 53, 64, 80, 96, 114, 134, 156, 180, 206];
    const xs = Array.from({ length: 57 }, (_, i) => i - 28);
    return (
        <svg width="100%" height="226" viewBox="0 0 1377 226" preserveAspectRatio="none" className="absolute inset-x-0 bottom-0">
            <defs><linearGradient id="floor" x1="0" y1="0" x2="0" y2="1"><stop offset="0" stopColor="#000" /><stop offset=".25" stopColor="#000" stopOpacity=".6" /><stop offset=".7" stopColor="#000" stopOpacity="0" /></linearGradient></defs>
            <g stroke="#1b2f0a">
                {ys.map((y) => <line key={y} x1="0" x2="1377" y1={y} y2={y} />)}
                {xs.map((i) => <line key={i} x1={667 + i * 18} y1="0" x2={667 + i * 36} y2="226" />)}
            </g>
            <rect width="1377" height="226" fill="url(#floor)" />
        </svg>
    );
}

function ControlAssign() {
    const btn = "relative h-[74px] w-[104px] rounded-sm bg-linear-to-r from-[#363636] to-[#1f1f1f] text-[12px] font-bold leading-[17px] text-white";
    return (
        <section className="mb-[26px] ml-1.5 mr-[5px] flex flex-1 overflow-hidden rounded-b-sm rounded-tr-sm border border-[#404040] bg-[#1b1b1b]">
            <div className="flex w-[123px] flex-col gap-[5px] bg-[#404040] pl-[9px] pt-1.5">
                <button className={`${btn} flex flex-col items-center gap-px pt-3`}>
                    <svg width="38" height="38" viewBox="0 0 38 38"><path d="M.5.500h37v37H.5z" fill="none" stroke="#fff" /><path d="M19 7v24M7 19h24" stroke="#fff" strokeWidth="3" /></svg>
                    New
                </button>
                <button className={btn}>
                    <svg width="11" height="9" viewBox="0 0 11 9" className="absolute right-0.5 top-1"><path d="M0 4.500h10M6.500 1 10 4.500 6.500 8" fill="none" stroke="#fff" strokeWidth="1.200" /></svg>
                    Edit Common<br />Control Assign
                </button>
                <label className="relative flex h-[74px] w-[104px] flex-col border border-[#666] text-[12px] font-bold text-white">
                    <span className="pl-1 leading-[18px]">Display Filter</span>
                    <Triangle className="absolute right-[3px] top-1 text-[#999]" />
                    <select className="h-[54px] w-full appearance-none text-center text-[13px]"><option>ModWheel</option></select>
                </label>
            </div>
        </section>
    );
}

export default function App() {
    return (
        <div className="flex min-h-screen flex-col border border-[#4c93b1] bg-[#61b9dc] px-1 pb-1 font-['Noto_Sans',sans-serif]">
            <TitleBar />
            <div className="flex flex-1 flex-col bg-black">
                <HostToolbar />
                <PluginHeader />
                <div className="flex flex-1">
                    <SideNav />
                    <main className="flex min-w-0 flex-1 flex-col">
                        <CommonBar />
                        <div className="relative mt-[5px]">
                            <FloorGrid />
                            <div className="relative flex gap-[5px] pl-1.5 pr-[5px]">
                                <LeftColumn />
                                <div className="relative min-w-0 flex-1">
                                    <ElementTable />
                                    <div className="flex gap-1"><PitchPanel /><FilterPanel /><EqPanel /></div>
                                    <button aria-label="Collapse" className="absolute -right-[5px] top-[209px] flex h-10 w-[25px] items-center justify-center rounded-l-md border border-r-0 border-[#6a6a6a] bg-[#555] text-white">
                                        <svg width="12" height="12" viewBox="0 0 12 12" fill="none" stroke="currentColor" strokeWidth="1.200"><path d="M5.500.5 1 6l4.500 5.500M11 .5 6.500 6l4.500 5.500" /></svg>
                                    </button>
                                </div>
                            </div>
                        </div>
                        <ControlAssign />
                    </main>
                </div>
            </div>
        </div>
    );
}
